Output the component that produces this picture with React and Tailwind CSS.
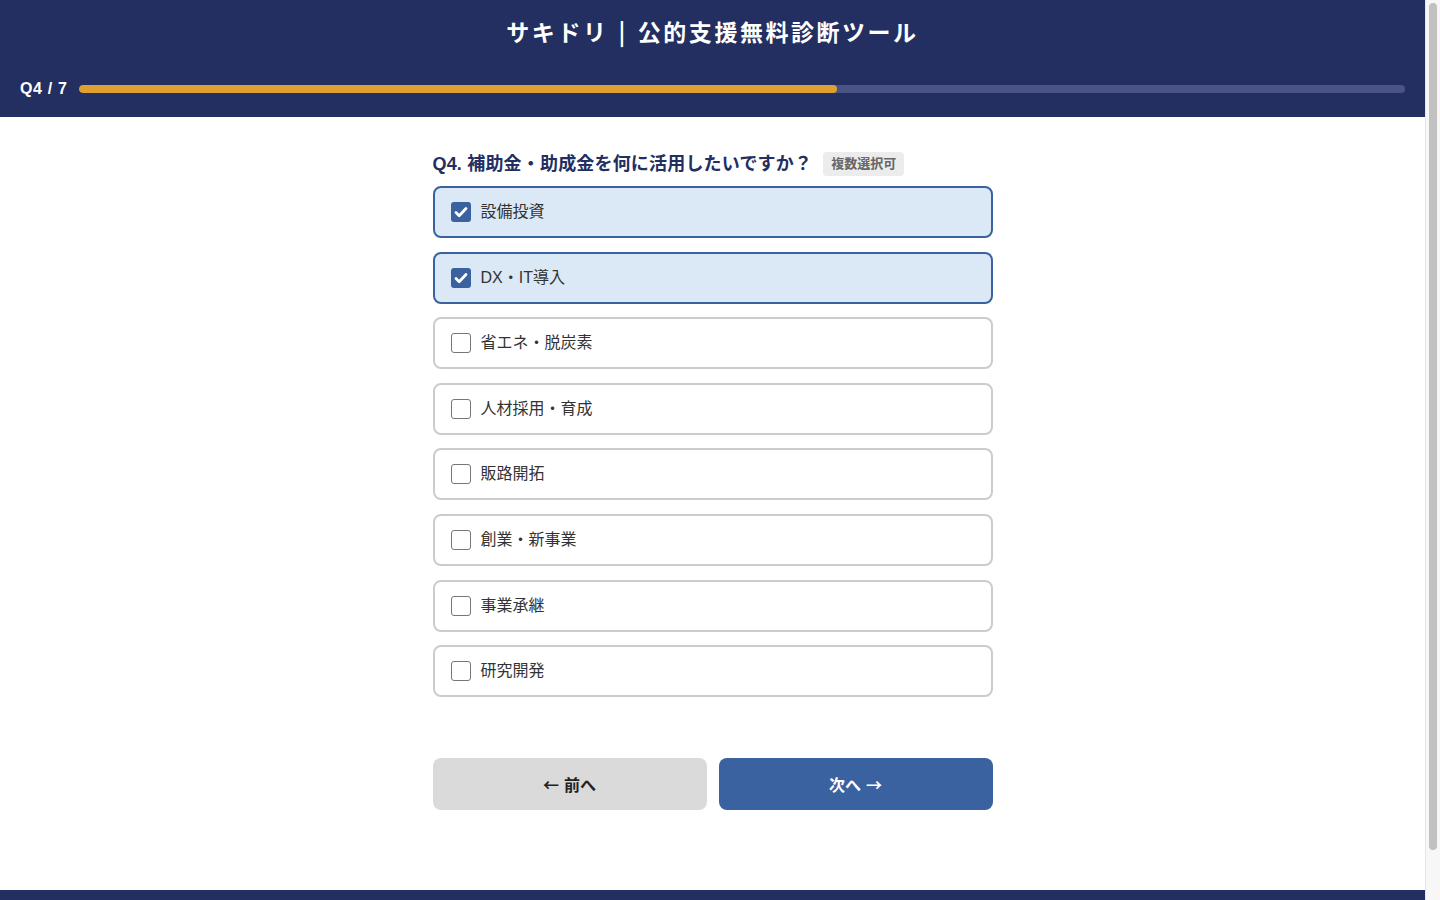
import { useState } from 'react'

const OPTIONS = [
  '設備投資',
  'DX・IT導入',
  '省エネ・脱炭素',
  '人材採用・育成',
  '販路開拓',
  '創業・新事業',
  '事業承継',
  '研究開発',
]

const FONT = { fontFamily: '"Liberation Sans", "Noto Sans CJK JP", sans-serif' }
const CJK = { fontFamily: '"Noto Sans CJK JP", sans-serif' }

function Check({ on }) {
  if (!on) return <span className="w-5 h-5 shrink-0 rounded-[3px] border border-[#767676] bg-white" />
  return (
    <span className="w-5 h-5 shrink-0 rounded-[3px] bg-[#3a62a0] flex items-center justify-center">
      <svg width="16" height="16" viewBox="0 0 16 16" fill="none">
        <path d="M3 8.5l3.2 3.2L13 4.5" stroke="#fff" strokeWidth="2.8" strokeLinecap="round" strokeLinejoin="round"/>
      </svg>
    </span>
  )
}

export default function App() {
  const [sel, setSel] = useState(['設備投資', 'DX・IT導入'])

  function toggle(o) {
    setSel(s => s.includes(o) ? s.filter(x => x !== o) : [...s, o])
  }

  return (
    <div className="min-h-screen bg-white flex flex-col mr-[15px]" style={FONT}>
      {/* ヘッダー */}
      <header className="bg-[#232e61] text-white px-5 pt-[14px] pb-[18px]">
        <h1 className="flex justify-center items-center text-[23px] font-bold tracking-[0.11em] leading-[34px]" style={CJK}>
          <span>サキドリ</span>
          <span className="mx-[10px]">|</span>
          <span>公的支援無料診断ツール</span>
        </h1>
        <div className="flex items-center gap-3 mt-[31px]">
          <span className="text-[16px] font-bold leading-5 shrink-0 tracking-[0.04em]">Q4 / 7</span>
          <div className="flex-1 h-2 rounded-full bg-[#4a5384] overflow-hidden">
            <div className="h-full rounded-full bg-[#e0a030]" style={{ width: `${(4 / 7) * 100}%` }} />
          </div>
        </div>
      </header>

      {/* 質問 */}
      <main className="w-[560px] mx-auto pt-[33px] pb-20">
        <div className="flex items-center gap-[11px] mb-[8px]">
          <h2 className="text-lg font-bold text-[#232e61] leading-7 tracking-[0.01em]">Q4. 補助金・助成金を何に活用したいですか？</h2>
          <span className="bg-[#ececec] text-[#666] text-[13px] font-bold px-2 py-[2px] rounded">複数選択可</span>
        </div>

        <div className="flex flex-col gap-[13.6px]">
          {OPTIONS.map(o => {
            const on = sel.includes(o)
            return (
              <button key={o} onClick={() => toggle(o)}
                className={`h-[52px] flex items-center gap-[10px] px-4 rounded-lg border-2 text-left text-base text-[#333] ${
                  on ? 'bg-[#dbe9f6] border-[#3a62a0]' : 'bg-white border-[#cccccc]'
                }`}>
                <Check on={on} />
                <span>{o}</span>
              </button>
            )
          })}
        </div>

        <div className="grid grid-cols-2 gap-3 mt-[61px]" style={CJK}>
          <button className="h-[52px] rounded-lg bg-[#dadada] text-[#222] font-bold text-base flex items-center justify-center gap-[5px]">
            <span>←</span><span>前へ</span>
          </button>
          <button className="h-[52px] rounded-lg bg-[#3a62a0] text-white font-bold text-base flex items-center justify-center gap-[5px]">
            <span>次へ</span><span>→</span>
          </button>
        </div>
      </main>

      <footer className="bg-[#232e61] h-[80px] mt-auto" />

      {/* スクロールバー */}
      <div className="fixed top-0 right-0 bottom-0 w-[15px] bg-[#f7f7f7] border-l border-[#e6e6e6] flex justify-center pt-[3px] pb-[50px]">
        <div className="w-[8px] h-full rounded-full bg-[#c1c1c1]" />
      </div>
    </div>
  )
}
